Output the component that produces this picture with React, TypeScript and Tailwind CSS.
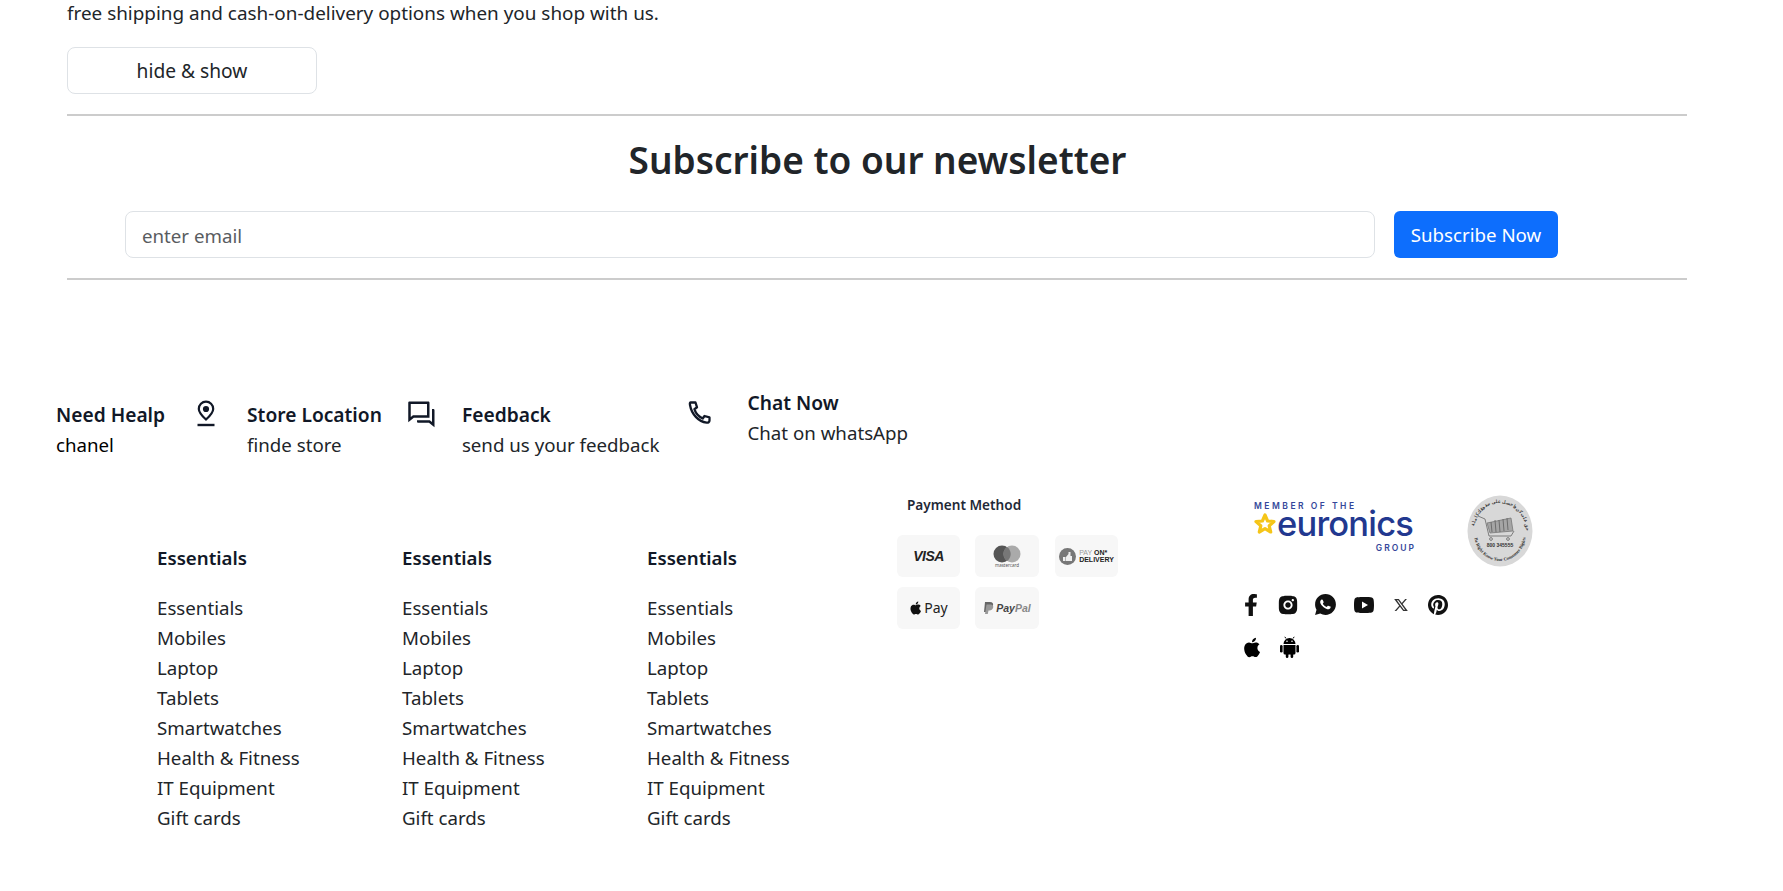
import React from "react";
import { RiQuestionAnswerLine, RiWhatsappFill, RiYoutubeFill, RiPinterestFill, RiInstagramFill, RiTwitterXLine, RiAppleFill } from "react-icons/ri";
import { FaFacebookF } from "react-icons/fa";

const font = "font-['Noto_Sans','Open_Sans',sans-serif]";
const links = ["Essentials", "Mobiles", "Laptop", "Tablets", "Smartwatches", "Health & Fitness", "IT Equipment", "Gift cards"];

function PinIcon() {
  return (
    <svg width="22" height="28" viewBox="0 0 22 28" fill="none" stroke="#111827" strokeWidth="2.200">
      <path d="M11 19.5C7 15.8 3.8 12.6 3.8 8.9a7.2 7.2 0 0 1 14.4 0c0 3.7-3.2 6.9-7.2 10.6z" />
      <circle cx="11" cy="9" r="2" fill="#111827" />
      <path d="M2.5 25h17" strokeWidth="2.4" />
    </svg>
  );
}

function PhoneIcon() {
  return (
    <svg width="26" height="26" viewBox="0 0 26 26" fill="none" stroke="#111827" strokeWidth="2.3" strokeLinejoin="round">
      <path d="M2.500 2.500h5l1.500 4.800-2.600 1.900c1.400 4.400 4.100 7.400 8.300 9.300l1.800-2.500 5 1.400v3.100c0 1.500-1.300 2.300-2.900 2.100C10.500 21.800 3.500 14 2 5c-.2-1.300-.2-2.500.5-2.500z" />
    </svg>
  );
}

function AndroidIcon() {
  return (
    <svg width="21" height="22" viewBox="0 0 21 22" fill="#000">
      <path d="M4.500 8a6 6 0 0 1 12 0z" />
      <path d="M7 2.500L5.800.8M14 2.500L15.200.8" stroke="#000" strokeWidth="1" />
      <circle cx="8" cy="5.200" r=".8" fill="#fff" />
      <circle cx="13" cy="5.200" r=".8" fill="#fff" />
      <path d="M4.500 9h12v8a1.500 1.500 0 0 1-1.500 1.500H6A1.500 1.500 0 0 1 4.500 17z" />
      <rect x="1" y="9" width="2.600" height="7.500" rx="1.300" />
      <rect x="17.400" y="9" width="2.600" height="7.500" rx="1.300" />
      <rect x="6.800" y="17" width="2.600" height="5" rx="1.300" />
      <rect x="11.600" y="17" width="2.600" height="5" rx="1.300" />
    </svg>
  );
}

function Info({ title, sub, black }: { title: string; sub: string; black?: boolean }) {
  return (
    <div className="flex flex-col">
      <span className="text-[19.2px] leading-[30px] font-semibold text-[#111827] whitespace-nowrap">{title}</span>
      <span className={`text-[18.7px] leading-[30px] whitespace-nowrap ${black ? "text-black" : "text-[#212529]"}`}>{sub}</span>
    </div>
  );
}

function LinkColumn() {
  return (
    <div className="w-[245px] pt-[56px]">
      <h5 className="text-[18.7px] leading-[30px] font-semibold text-[#111827]">Essentials</h5>
      <ul className="mt-5 flex flex-col">
        {links.map((l) => (
          <li key={l} className="text-[18.7px] leading-[30px] text-[#212529]">{l}</li>
        ))}
      </ul>
    </div>
  );
}

function Chip({ w, children }: { w: string; children: React.ReactNode }) {
  return <div className={`${w} h-[42px] rounded-md bg-[#f7f7f7] flex items-center justify-center`}>{children}</div>;
}

function Payment() {
  return (
    <div className="ml-[5px] w-[260px] pt-[8px]">
      <div className="pl-[10px] text-[13.6px] leading-[20px] font-semibold text-[#1f2937]">Payment Method</div>
      <div className="mt-[20px] flex gap-[15px]">
        <Chip w="w-[63px]">
          <span className="font-['Liberation_Sans',sans-serif] italic font-bold text-[14px] text-[#222] tracking-[-0.5px]">VISA</span>
        </Chip>
        <Chip w="w-[64px]">
          <div className="flex flex-col items-center">
            <svg width="28" height="18" viewBox="0 0 28 18">
              <circle cx="9" cy="9" r="8.500" fill="#555" />
              <circle cx="19" cy="9" r="8.500" fill="#aaa" />
              <path d="M14 2a8.500 8.500 0 0 1 0 14 8.500 8.500 0 0 1 0-14z" fill="#777" />
            </svg>
            <span className="text-[4.500px] leading-[5px] text-[#555]">mastercard</span>
          </div>
        </Chip>
        <Chip w="w-[63px] ml-px">
          <div className="flex items-center gap-[3px]">
            <svg width="17" height="17" viewBox="0 0 17 17">
              <circle cx="8.500" cy="8.500" r="8.500" fill="#777" />
              <path d="M4 9h2.500v4H4zM7 9l2.500-3v-2h2v4h1.500v5H7z" fill="#eee" />
            </svg>
            <div className="flex flex-col font-['Liberation_Sans',sans-serif] text-[7px] leading-[7.500px] font-bold text-[#222]">
              <span><span className="font-normal text-[#999]">PAY</span> ON*</span>
              <span>DELIVERY</span>
            </div>
          </div>
        </Chip>
      </div>
      <div className="mt-[10px] flex gap-[15px]">
        <Chip w="w-[63px]">
          <div className="flex items-center gap-[1px] text-[#222]">
            <RiAppleFill size={14} color="#111" />
            <span className="text-[14px] leading-none">Pay</span>
          </div>
        </Chip>
        <Chip w="w-[64px]">
          <div className="flex items-center gap-[2px]">
            <svg width="11" height="13" viewBox="0 0 11 13">
              <path d="M2 0h5c2.500 0 3.500 1.500 3 3.500C9.500 6 8 7 6 7H4.500L3.800 10H1z" fill="#666" />
              <path d="M3.500 2.500h4.500c2 .5 2.500 1.500 2.200 3C9.700 7.500 8 8.500 6.500 8.500H5.500L4.800 12H2z" fill="#999" />
            </svg>
            <span className="font-['Liberation_Sans',sans-serif] italic font-bold text-[10.500px] leading-none text-[#444]">Pay<span className="text-[#888]">Pal</span></span>
          </div>
        </Chip>
      </div>
    </div>
  );
}

function Euronics() {
  return (
    <div className="w-[162px] mt-[10px] flex flex-col font-['Inter',sans-serif] text-[#22388f] select-none">
      <span className="text-[8.500px] leading-[10px] font-semibold tracking-[2.500px] text-[#34479a] whitespace-nowrap">MEMBER OF THE</span>
      <div className="flex items-center h-[26px]">
        <svg width="24" height="24" viewBox="0 0 24 24" className="shrink-0 -ml-[1px]" fill="#fff" stroke="#f5c518" strokeWidth="3.200" strokeLinejoin="round">
          <path d="M12 3l2.600 6 6.400.6-4.800 4.200 1.500 6.200-5.700-3.300L6.300 20l1.500-6.200L3 9.600 9.400 9z" />
        </svg>
        <span className="text-[34.5px] leading-[26px] font-medium tracking-[-0.800px]">euronics</span>
      </div>
      <span className="mt-[6px] self-end text-[8.500px] leading-[10px] font-semibold tracking-[2px] text-[#34479a]">GROUP</span>
    </div>
  );
}

function Stamp() {
  return (
    <svg width="66" height="72" viewBox="0 0 66 72" className="shrink-0 mt-[4px]">
      <defs>
        <path id="top-arc" d="M7 36a26 28 0 0 1 52 0" />
        <path id="bottom-arc" d="M7 38a26 28 0 0 0 52 0" />
      </defs>
      <ellipse cx="33" cy="36" rx="32.500" ry="35.500" fill="#d8d8d8" />
      <text fontSize="4.500" fill="#333" fontFamily="'Noto Sans', sans-serif" fontWeight="700">
        <textPath href="#top-arc" startOffset="6%">حق على كن واحصل على حقوقك كاملة</textPath>
      </text>
      <text fontSize="4.500" fill="#333" fontFamily="'Liberation Serif', serif" fontWeight="700">
        <textPath href="#bottom-arc" startOffset="6%">Be Right Know Your Consumer Rights</textPath>
      </text>
      <g stroke="#666" fill="none" strokeWidth="0.800">
        <path d="M11 21l7 3 4 17h22l3-5" />
        <path d="M20 28l24-5 2 13-23 2z" fill="#a5a5a5" stroke="#777" />
        <path d="M24 27l1 10M28 25l1 12M32 25l1 12M36 24l1 12M40 23l1 12" stroke="#666" strokeWidth="0.900" />
        <circle cx="24" cy="44" r="1.400" />
        <circle cx="41" cy="44" r="1.400" />
      </g>
      <text x="33" y="52" textAnchor="middle" fontSize="5" fill="#333" fontFamily="'Liberation Sans', sans-serif" fontWeight="700">800 345555</text>
    </svg>
  );
}

function Social() {
  return (
    <div className="mt-[29px] -ml-[14px] flex flex-col gap-[19px]">
      <div className="flex items-center gap-[15px] text-[#111]">
        <FaFacebookF size={22} />
        <RiInstagramFill size={22} />
        <RiWhatsappFill size={25} className="-mx-[1px]" />
        <RiYoutubeFill size={24} />
        <RiTwitterXLine size={16} color="#333" className="mx-[2px]" />
        <RiPinterestFill size={24} />
      </div>
      <div className="flex items-center gap-[16px] text-black pl-[2px]">
        <RiAppleFill size={21} />
        <AndroidIcon />
      </div>
    </div>
  );
}

export default function App() {
  return (
    <div className={`${font} h-[891px] overflow-hidden bg-white text-[#212529]`}>
      <div className="px-[67px]">
        <p className="-mt-[2px] text-[18.9px] leading-[30px] whitespace-nowrap">free shipping and cash-on-delivery options when you shop with us.</p>
        <button className="mt-[19px] pt-[2px] w-[250px] h-[47px] rounded-lg border border-[#dee2e6] text-[19.2px] text-[#212529] bg-white">hide &amp; show</button>
        <div className="mt-[20px] w-[1620px] border-t-2 border-[#cccccc]" />
        <h2 className="mt-[20px] w-[1621px] text-center text-[37px] leading-[48px] font-semibold">Subscribe to our newsletter</h2>
        <div className="mt-[27px] pl-[58px] flex gap-[19px]">
          <input
            placeholder="enter email"
            className="w-[1250px] h-[47px] px-[16px] pt-[1px] rounded-lg border border-[#dee2e6] text-[18.7px] outline-none placeholder:text-[#595c5f]"
          />
          <button className="w-[164px] h-[47px] pt-[1px] rounded-md bg-[#0d6efd] text-white text-[18.7px] whitespace-nowrap">Subscribe Now</button>
        </div>
        <div className="mt-[20px] w-[1620px] border-t-2 border-[#cccccc]" />
      </div>

      <div className="mt-[120px] pl-[56px] flex items-start h-[60px]">
        <Info title="Need Healp" sub="chanel" black />
        <div className="ml-[30px] shrink-0"><PinIcon /></div>
        <div className="ml-[30px]"><Info title="Store Location" sub="finde store" /></div>
        <div className="ml-[25px] -mt-[1px] text-[#111827]"><RiQuestionAnswerLine size={30} /></div>
        <div className="ml-[25px]"><Info title="Feedback" sub="send us your feedback" /></div>
        <div className="ml-[28px]"><PhoneIcon /></div>
        <div className="ml-[34px] -mt-[12px]"><Info title="Chat Now" sub="Chat on whatsApp" /></div>
      </div>

      <div className="mt-[27px] pl-[157px] flex items-start">
        <LinkColumn />
        <LinkColumn />
        <LinkColumn />
        <Payment />
        <div className="ml-[97px] pt-[4px]">
          <div className="flex items-start gap-[51px] h-[72px]">
            <Euronics />
            <Stamp />
          </div>
          <Social />
        </div>
      </div>
    </div>
  );
}
